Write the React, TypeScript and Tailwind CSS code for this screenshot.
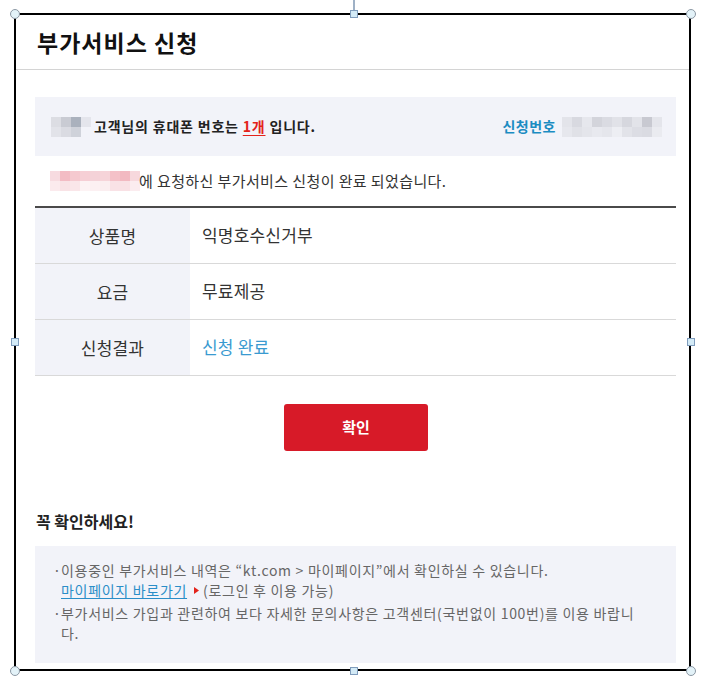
import React from "react";

const font = { fontFamily: '"Noto Sans CJK KR", "Noto Sans", sans-serif' };

function Mosaic({ rows, cell }: { rows: string[][]; cell: number }) {
  return (
    <div className="flex flex-col">
      {rows.map((r, i) => (
        <div key={i} className="flex">
          {r.map((c, j) => (
            <div key={j} style={{ width: cell, height: cell, background: c }} />
          ))}
        </div>
      ))}
    </div>
  );
}

const nameBlur = [
  ["#dcdde3", "#c9cbd3", "#aab1bd", "#e4e5ec"],
  ["#e2e3e9", "#dadbe2", "#cfd2da", "transparent"],
];
const pinkBlur = [
  ["#f7dbe0", "#f3bcc4", "#f5c9cf", "#f6cfd5", "#f4d2d8", "#f6d4d9", "#f4c1c8", "#f2b9c1", "#f7d8dd"],
  ["#fbeaed", "#f9e3e6", "#fae6e9", "#fdf3f4", "#fcf0f2", "#fbeef0", "#f9e2e6", "#f9e1e5", "#fbecef"],
];
const numBlur = [
  ["#e3e4ea", "#d8d9e0", "#e6e7ed", "#d3d4db", "#dadbe2", "#e1e2e8", "#d6d7de", "#e2e3e9", "#c8c9d1", "#e4e5eb"],
  ["#e6e7ed", "#e0e1e7", "#e4e5eb", "#e8e9ef", "#e5e6ec", "#edeef3", "#e2e3e9", "#dcdde4", "#dadbe2", "#eaebf0"],
];

function Circle({ className }: { className: string }) {
  return (
    <div
      className={`absolute w-[10px] h-[10px] rounded-full bg-[#e3f2f8] border border-[#8c98a4] ${className}`}
    />
  );
}
function Square({ className }: { className: string }) {
  return (
    <div className={`absolute w-[8px] h-[8px] bg-[#d3eaf6] border border-[#7f9cbc] ${className}`} />
  );
}

export default function App() {
  return (
    <div className="relative w-[705px] h-[691px] bg-white overflow-hidden text-[#222]" style={font}>
      {/* rotate line */}
      <div className="absolute left-[353px] top-0 w-[2px] h-[13px] bg-[#9fb1c6]" />
      <div className="absolute left-[14px] top-[13px] w-[677px] h-[658px] border-2 border-black bg-white flex flex-col">
        <div className="h-[55px] shrink-0 border-b border-[#d4d4d4] flex items-center pl-[21px] pt-[1px]">
          <h1 className="text-[23px] font-bold text-[#111] tracking-[1px]">부가서비스 신청</h1>
        </div>
        <div className="pl-[19px] pr-[13px] pt-[27px] flex flex-col">
          {/* info box */}
          <div className="h-[59px] bg-[#f2f3f9] flex items-center justify-between pl-[16px] pr-[14px]">
            <div className="flex items-center gap-[2px] text-[14px] font-bold text-[#222] tracking-[0.8px]">
              <Mosaic rows={nameBlur} cell={10} />
              <span className="ml-[1px]">
                고객님의 휴대폰 번호는{" "}
                <span className="text-[#e3231b] underline underline-offset-[3px] decoration-[#e3231b]">1개</span> 입니다.
              </span>
            </div>
            <div className="flex items-center gap-[6px]">
              <span className="text-[14px] font-bold text-[#1b8cc2] tracking-[0.5px]">신청번호</span>
              <Mosaic rows={numBlur} cell={10} />
            </div>
          </div>
          {/* completed line */}
          <div className="h-[50px] flex items-center pl-[15px] text-[15px] text-[#333] tracking-[0.4px]">
            <Mosaic rows={pinkBlur} cell={10} />
            <span className="-ml-[1px]">에 요청하신 부가서비스 신청이 완료 되었습니다.</span>
          </div>
          {/* table */}
          <div className="border-t-2 border-[#4a4a4a] flex flex-col text-[17px] tracking-[0.2px]">
            {[
              ["상품명", "익명호수신거부", false],
              ["요금", "무료제공", false],
              ["신청결과", "신청 완료", true],
            ].map(([h, v, blue]) => (
              <div key={h as string} className="flex h-[56px] border-b border-[#d9d9d9]">
                <div className="w-[155px] bg-[#f2f3f9] flex items-center justify-center text-[#333]">{h}</div>
                <div className={`flex-1 flex items-center pl-[12px] pb-[2px] ${blue ? "text-[#3a9ad0]" : "text-[#333]"}`}>
                  {v}
                </div>
              </div>
            ))}
          </div>
          {/* button */}
          <div className="flex justify-center pt-[28px] pl-[1px]">
            <button className="w-[144px] h-[47px] bg-[#d71a28] rounded-[3px] text-white text-[15px] font-bold">
              확인
            </button>
          </div>
          {/* notice */}
          <div className="pt-[58px] pb-[13px] pl-[1px] text-[16px] font-bold text-[#222]">꼭 확인하세요!</div>
          <div className="h-[117px] bg-[#f2f3f9] pt-[14px] pl-[18px] text-[14px] text-[#666] leading-[20px] tracking-[0.7px] flex flex-col gap-[3px]">
            <div className="flex">
              <span className="w-[8px] shrink-0">·</span>
              <div>
                <div>이용중인 부가서비스 내역은 “kt.com &gt; 마이페이지”에서 확인하실 수 있습니다.</div>
                <div className="flex items-center">
                  <span className="text-[#2a8ec8] underline underline-offset-[2px] decoration-[#2a8ec8]">
                    마이페이지 바로가기
                  </span>
                  <svg width="5" height="7" viewBox="0 0 5 7" className="ml-[7px] mr-[4px]">
                    <path d="M0 0 L5 3.5 L0 7 Z" fill="#e3231b" />
                  </svg>
                  <span>(로그인 후 이용 가능)</span>
                </div>
              </div>
            </div>
            <div className="flex">
              <span className="w-[8px] shrink-0">·</span>
              <div>
                <div>부가서비스 가입과 관련하여 보다 자세한 문의사항은 고객센터(국번없이 100번)를 이용 바랍니</div>
                <div>다.</div>
              </div>
            </div>
          </div>
        </div>
      </div>
      {/* handles */}
      <Circle className="left-[10px] top-[9px]" />
      <Circle className="left-[686px] top-[9px]" />
      <Circle className="left-[10px] top-[666px]" />
      <Circle className="left-[686px] top-[666px]" />
      <Square className="left-[350px] top-[10px]" />
      <Square className="left-[11px] top-[338px]" />
      <Square className="left-[687px] top-[338px]" />
      <Square className="left-[350px] top-[667px]" />
    </div>
  );
}
